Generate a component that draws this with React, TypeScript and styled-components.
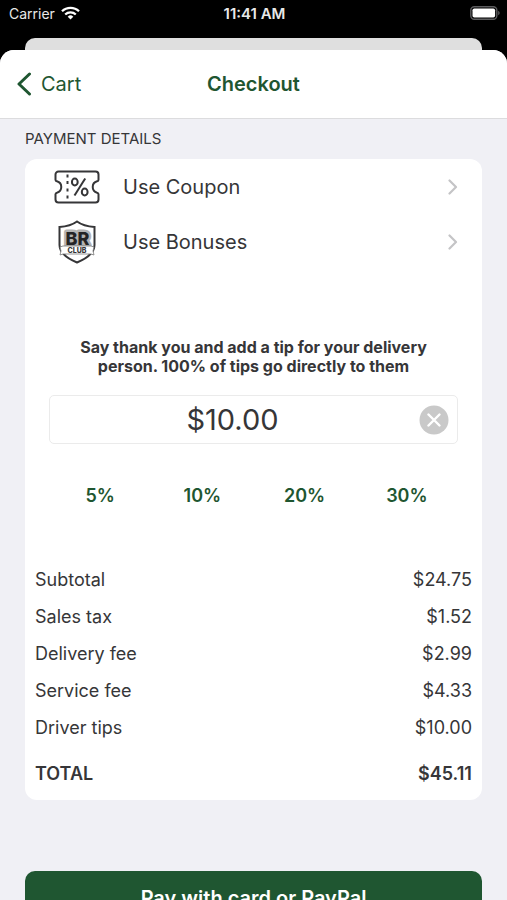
import React, { useState } from "react";
import styled, { createGlobalStyle } from "styled-components";

const green = "#1f5631";
const ink = "#363638";

const GlobalStyle = createGlobalStyle`
  *, *::before, *::after { box-sizing: border-box; }
  body {
    margin: 0;
    background: #000;
    color: ${ink};
    font-family: Inter, "Liberation Sans", sans-serif;
  }
  button, input { font: inherit; color: inherit; }
  button { border: 0; padding: 0; background: none; cursor: pointer; }
`;

const Screen = styled.div`
  display: flex;
  flex-direction: column;
  height: 100vh;
  overflow: hidden;
  background: #000;
`;

const StatusBar = styled.header`
  display: grid;
  grid-template-columns: 1fr auto 1fr;
  align-items: center;
  height: 26px;
  margin-bottom: 12px;
  padding: 0 7px 0 9px;
  color: #e8e8e8;
  font-size: 14px;
  flex: none;
`;

const Carrier = styled.div`
  display: flex;
  align-items: center;
  gap: 6px;
`;

const Clock = styled.time`
  font-size: 15px;
  font-weight: 600;
`;

const Battery = styled.svg`
  justify-self: end;
`;

const SheetBehind = styled.div`
  flex: none;
  height: 28px;
  margin: 0 25px -16px;
  border-radius: 10px 10px 0 0;
  background: #dfdfdf;
`;

const Sheet = styled.main`
  position: relative;
  display: flex;
  flex-direction: column;
  flex: 1;
  min-height: 0;
  border-radius: 14px 14px 0 0;
  overflow: hidden;
  background: #f0f0f5;
`;

const NavBar = styled.nav`
  display: grid;
  grid-template-columns: 1fr auto 1fr;
  align-items: center;
  flex: none;
  height: 69px;
  padding: 0 16px;
  border-bottom: 1px solid #dcdcde;
  background: #fff;
  color: ${green};
`;

const BackButton = styled.button`
  display: flex;
  align-items: center;
  gap: 9px;
  justify-self: start;
  font-size: 20px;
`;

const Title = styled.h1`
  margin: 0;
  font-size: 20px;
  font-weight: 600;
`;

const Content = styled.div`
  flex: 1;
  min-height: 0;
  padding: 0 25px 24px;
  overflow-y: auto;
  scrollbar-width: none;
`;

const SectionTitle = styled.h2`
  margin: 0;
  font-size: 15px;
  font-weight: 400;
  line-height: 40px;
`;

const Card = styled.section`
  border-radius: 12px;
  background: #fff;
`;

const OptionRow = styled.button`
  display: grid;
  grid-template-columns: 46px 1fr auto;
  column-gap: 23px;
  align-items: center;
  justify-items: start;
  width: 100%;
  height: 55px;
  padding: 0 24px 0 29px;
  font-size: 20px;

  svg:first-child { justify-self: center; }
`;

const TipPrompt = styled.label`
  display: block;
  max-width: 370px;
  margin: 69px auto 19px;
  font-size: 16px;
  font-weight: 700;
  line-height: 19px;
  text-align: center;
`;

const AmountField = styled.div`
  display: flex;
  align-items: center;
  height: 49px;
  margin: 0 24px;
  padding: 0 8px 0 4px;
  border: 1px solid #ebebeb;
  border-radius: 5px;
`;

const AmountInput = styled.input`
  flex: 1;
  min-width: 0;
  padding: 0;
  border: 0;
  outline: 0;
  background: none;
  font-size: 29px;
  text-align: center;
`;

const ClearButton = styled.button`
  display: flex;
  flex: none;
  margin-left: 8px;
`;

const Presets = styled.div`
  display: grid;
  grid-template-columns: repeat(4, 1fr);
  margin: 27px 24px 42px;
`;

const Preset = styled.button`
  height: 48px;
  color: ${green};
  font-size: 18px;
  font-weight: 600;
`;

const Summary = styled.table`
  width: 100%;
  border-collapse: collapse;
  font-size: 18px;
`;

const SummaryRow = styled.tr<{ $total?: boolean }>`
  height: ${(p) => (p.$total ? 54 : 37)}px;

  th, td {
    padding: 0 10px;
    font-weight: ${(p) => (p.$total ? 600 : 400)};
    text-align: left;
  }
  td { text-align: right; }
`;

const PayButton = styled.button`
  display: block;
  width: 100%;
  height: 54px;
  margin-top: 71px;
  border-radius: 10px;
  background: ${green};
  color: #fff;
  font-size: 20px;
  font-weight: 600;
`;

const Chevron = () => (
  <svg width="10" height="16" viewBox="0 0 10 16" fill="none" aria-hidden="true">
    <path d="M1.500 1.500 8 8l-6.500 6.500" stroke="#c4c4c6" strokeWidth="2.200" strokeLinecap="round" strokeLinejoin="round" />
  </svg>
);

const WifiIcon = () => (
  <svg width="19" height="14" viewBox="0 0 19 14" aria-hidden="true">
    <g fill="none" stroke="#fff" strokeWidth="2.300">
      <path d="M1 5.300a12.200 12.200 0 0 1 17 0" />
      <path d="M4.200 8.500a7.700 7.700 0 0 1 10.600 0" />
    </g>
    <path d="M9.500 13.500 6.700 10.700a4 4 0 0 1 5.600 0z" fill="#fff" />
  </svg>
);

const BatteryIcon = () => (
  <Battery width="30" height="14" viewBox="0 0 30 14" role="img" aria-label="Battery full">
    <rect x=".8" y=".8" width="26" height="12.400" rx="3.500" fill="none" stroke="#5c5c5e" strokeWidth="1.400" />
    <rect x="2.500" y="2.500" width="22.600" height="9" rx="1.800" fill="#fff" />
    <path d="M28.200 4.800q1.500.7 1.500 2.200t-1.500 2.200z" fill="#5c5c5e" />
  </Battery>
);

const CouponIcon = () => (
  <svg width="46" height="34" viewBox="0 0 46 34" fill="none" stroke={ink} strokeWidth="2" aria-hidden="true">
    <path d="M4.500 1.500h37a3 3 0 0 1 3 3v5.200q0 1.300-1.400 1.600a5.900 5.900 0 0 0 0 11.400q1.400.3 1.400 1.600v5.200a3 3 0 0 1-3 3h-37a3 3 0 0 1-3-3v-5.200q0-1.300 1.400-1.600a5.900 5.900 0 0 0 0-11.400q-1.400-.3-1.400-1.600V4.500a3 3 0 0 1 3-3Z" />
    <path d="M13.500 4.500v3M13.500 11v3M13.500 18.500v3M13.500 25.500v3" />
    <ellipse cx="20.800" cy="12" rx="2.900" ry="3.400" />
    <ellipse cx="30.700" cy="22" rx="2.900" ry="3.400" />
    <path d="M31.200 8.500 20.500 25.500" />
  </svg>
);

const ClubIcon = () => (
  <svg width="40" height="44" viewBox="0 0 40 44" aria-hidden="true">
    <path d="M20 1.500c4.500 3.300 10 5 17.500 5.500v18c0 8-8 13.500-17.500 17.500C10.500 38.500 2.500 33 2.500 25V7C10 6.500 15.500 4.800 20 1.500Z" fill="#fff" stroke={ink} strokeWidth="2" />
    <text x="20.500" y="24.500" textAnchor="middle" fontFamily="Inter, sans-serif" fontSize="18" fontWeight="800" fill="#252527" stroke="#b4b4b4" strokeWidth="5" strokeLinejoin="round" paintOrder="stroke">BR</text>
    <path d="m3 27 3-1h28l3 1-1 4 1 4-3-1H6l-3 1 1-4Z" fill="#fff" stroke="#777" strokeWidth=".8" />
    <text x="20" y="32.500" textAnchor="middle" fontFamily="Inter, sans-serif" fontSize="7" fontWeight="800" fill={ink}>CLUB</text>
  </svg>
);

const charges = [
  ["Subtotal", "$24.75"],
  ["Sales tax", "$1.52"],
  ["Delivery fee", "$2.99"],
  ["Service fee", "$4.33"],
  ["Driver tips", "$10.00"],
];

const presets = ["5%", "10%", "20%", "30%"];

export default function App() {
  const [tip, setTip] = useState("$10.00");

  return (
    <>
      <GlobalStyle />
      <Screen>
        <StatusBar>
          <Carrier>Carrier <WifiIcon /></Carrier>
          <Clock>11:41 AM</Clock>
          <BatteryIcon />
        </StatusBar>
        <SheetBehind />
        <Sheet>
          <NavBar>
            <BackButton type="button">
              <svg width="16" height="24" viewBox="0 0 16 24" fill="none" aria-hidden="true">
                <path d="M13.500 2 3 12l10.500 10" stroke={green} strokeWidth="3" strokeLinecap="round" strokeLinejoin="round" />
              </svg>
              Cart
            </BackButton>
            <Title>Checkout</Title>
          </NavBar>
          <Content>
            <SectionTitle>PAYMENT DETAILS</SectionTitle>
            <Card>
              <OptionRow type="button"><CouponIcon />Use Coupon<Chevron /></OptionRow>
              <OptionRow type="button"><ClubIcon />Use Bonuses<Chevron /></OptionRow>
              <TipPrompt htmlFor="tip">
                Say thank you and add a tip for your delivery person. 100% of tips go directly to them
              </TipPrompt>
              <AmountField>
                <AmountInput id="tip" inputMode="decimal" value={tip} onChange={(e) => setTip(e.target.value)} />
                <ClearButton type="button" aria-label="Clear tip" onClick={() => setTip("")}>
                  <svg width="30" height="30" viewBox="0 0 30 30" aria-hidden="true">
                    <circle cx="15" cy="15" r="14.500" fill="#c9c9c9" />
                    <path d="m9.500 9.500 11 11m0-11-11 11" stroke="#fff" strokeWidth="2.400" strokeLinecap="round" />
                  </svg>
                </ClearButton>
              </AmountField>
              <Presets>
                {presets.map((p) => <Preset key={p} type="button">{p}</Preset>)}
              </Presets>
              <Summary>
                <tbody>
                  {charges.map(([name, amount]) => (
                    <SummaryRow key={name}><th scope="row">{name}</th><td>{amount}</td></SummaryRow>
                  ))}
                  <SummaryRow $total><th scope="row">TOTAL</th><td>$45.11</td></SummaryRow>
                </tbody>
              </Summary>
            </Card>
            <PayButton type="button">Pay with card or PayPal</PayButton>
          </Content>
        </Sheet>
      </Screen>
    </>
  );
}
